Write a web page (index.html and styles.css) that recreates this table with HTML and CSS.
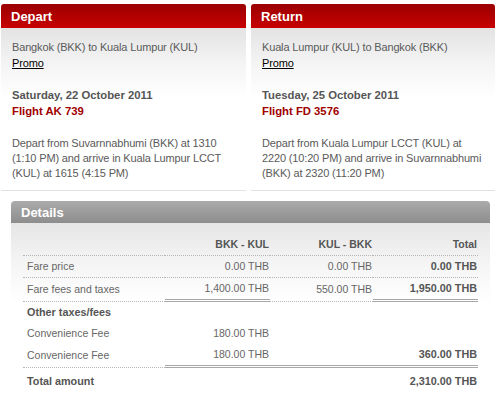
FILE: index.html
```html
<!DOCTYPE html>
<html>
<head>
<meta charset="utf-8">
<link rel="stylesheet" href="styles.css">
</head>
<body>
<div class="page">
  <div class="flights">
    <section class="panel panel-depart">
      <h2 class="panel-head">Depart</h2>
      <div class="panel-body">
        <p class="route">Bangkok (BKK) to Kuala Lumpur (KUL)</p>
        <a class="promo" href="#">Promo</a>
        <p class="date">Saturday, 22 October 2011</p>
        <p class="flight">Flight AK 739</p>
        <p class="desc">Depart from Suvarnnabhumi (BKK) at 1310 (1:10 PM) and arrive in Kuala Lumpur LCCT (KUL) at 1615 (4:15 PM)</p>
      </div>
    </section>
    <section class="panel panel-return">
      <h2 class="panel-head">Return</h2>
      <div class="panel-body">
        <p class="route">Kuala Lumpur (KUL) to Bangkok (BKK)</p>
        <a class="promo" href="#">Promo</a>
        <p class="date">Tuesday, 25 October 2011</p>
        <p class="flight">Flight FD 3576</p>
        <p class="desc">Depart from Kuala Lumpur LCCT (KUL) at 2220 (10:20 PM) and arrive in Suvarnnabhumi (BKK) at 2320 (11:20 PM)</p>
      </div>
    </section>
  </div>

  <section class="details">
    <h2 class="details-head">Details</h2>
    <div class="details-body">
      <table class="fares">
        <colgroup>
          <col class="c-label"><col class="c-val"><col class="c-val2"><col class="c-val">
        </colgroup>
        <thead>
          <tr class="line">
            <th class="label"></th>
            <th class="num">BKK - KUL</th>
            <th class="num">KUL - BKK</th>
            <th class="num">Total</th>
          </tr>
        </thead>
        <tbody>
          <tr class="line">
            <td class="label">Fare price</td>
            <td class="num">0.00 THB</td>
            <td class="num">0.00 THB</td>
            <td class="num strong">0.00 THB</td>
          </tr>
          <tr class="line">
            <td class="label">Fare fees and taxes</td>
            <td class="num dbl">1,400.00 THB</td>
            <td class="num">550.00 THB</td>
            <td class="num strong dbl">1,950.00 THB</td>
          </tr>
          <tr>
            <td class="label strong">Other taxes/fees</td>
            <td></td><td></td><td></td>
          </tr>
          <tr>
            <td class="label">Convenience Fee</td>
            <td class="num">180.00 THB</td>
            <td></td><td></td>
          </tr>
          <tr class="line">
            <td class="label">Convenience Fee</td>
            <td class="num dbl">180.00 THB</td>
            <td class="dbl"></td>
            <td class="num strong dbl">360.00 THB</td>
          </tr>
          <tr class="total">
            <td class="label strong">Total amount</td>
            <td></td><td></td>
            <td class="num strong">2,310.00 THB</td>
          </tr>
        </tbody>
      </table>
    </div>
  </section>
</div>
</body>
</html>
```

FILE: styles.css
```css
* { box-sizing: border-box; }
html, body { margin: 0; padding: 0; background: #fff; }
body { font-family: "Liberation Sans", Arial, sans-serif; color: #555; }

.page { padding: 4px 0 0 1px; width: 502px; }

.flights { display: flex; gap: 5px; }
.panel { width: 245px; }
.panel-return { width: 244px; }

.panel-head {
  margin: 0;
  height: 24px;
  line-height: 25px;
  padding-left: 10px;
  font-size: 13px;
  font-weight: bold;
  color: #fff;
  background: linear-gradient(#9a0000, #c80000);
  border-radius: 3px 3px 0 0;
}

.panel-body {
  padding: 11px 8px 9px 11px;
  font-size: 11px;
  letter-spacing: -0.15px;
  line-height: 16px;
  background: linear-gradient(#e3e3e3 0px, #f4f4f4 35px, #ffffff 70px);
  border-bottom: 1px solid #e2e2e2;
}
.panel-body p { margin: 0; }
.route { color: #5a5a5a; }
.promo { display: block; color: #000; text-decoration: underline; width: max-content; }
.date { margin-top: 16px !important; font-weight: bold; color: #555; font-size: 11.3px; letter-spacing: 0; }
.flight { font-weight: bold; color: #a00000; font-size: 11.3px; letter-spacing: 0; }
.desc { margin-top: 17px !important; line-height: 15px; color: #5a5a5a; }

.details { margin: 10px 0 0 10px; width: 479px; }
.details-head {
  margin: 0;
  height: 22px;
  line-height: 23px;
  padding-left: 10px;
  font-size: 13px;
  font-weight: bold;
  color: #fff;
  background: linear-gradient(#ababab, #8d8d8d);
  border-radius: 4px 4px 0 0;
}
.details-body {
  padding: 11px 11px 14px 12px;
  background: linear-gradient(#e6e6e6 0px, #f6f6f6 45px, #ffffff 80px);
}

.fares {
  border-collapse: separate;
  border-spacing: 0;
  width: 455px;
  table-layout: fixed;
  font-size: 10.5px;
  color: #666;
}
.c-label { width: 142px; }
.c-val { width: 105px; }
.c-val2 { width: 103px; }
.fares th, .fares td {
  padding: 0;
  line-height: 21px;
  white-space: nowrap;
  font-weight: normal;
}
.fares th { font-weight: bold; color: #555; font-size: 10.5px; }
.fares .label { text-align: left; padding-left: 4px; }
.fares .num { text-align: right; padding-right: 1px; }
.fares .strong { font-weight: bold; color: #555; font-size: 10.8px; }
.fares tr.line td, .fares tr.line th { border-bottom: 1px dotted #b5b5b5; }
.fares tr.line td.dbl { border-bottom: 3px double #a8a8a8; }
.fares tr.total td { padding-top: 3px; }
```
